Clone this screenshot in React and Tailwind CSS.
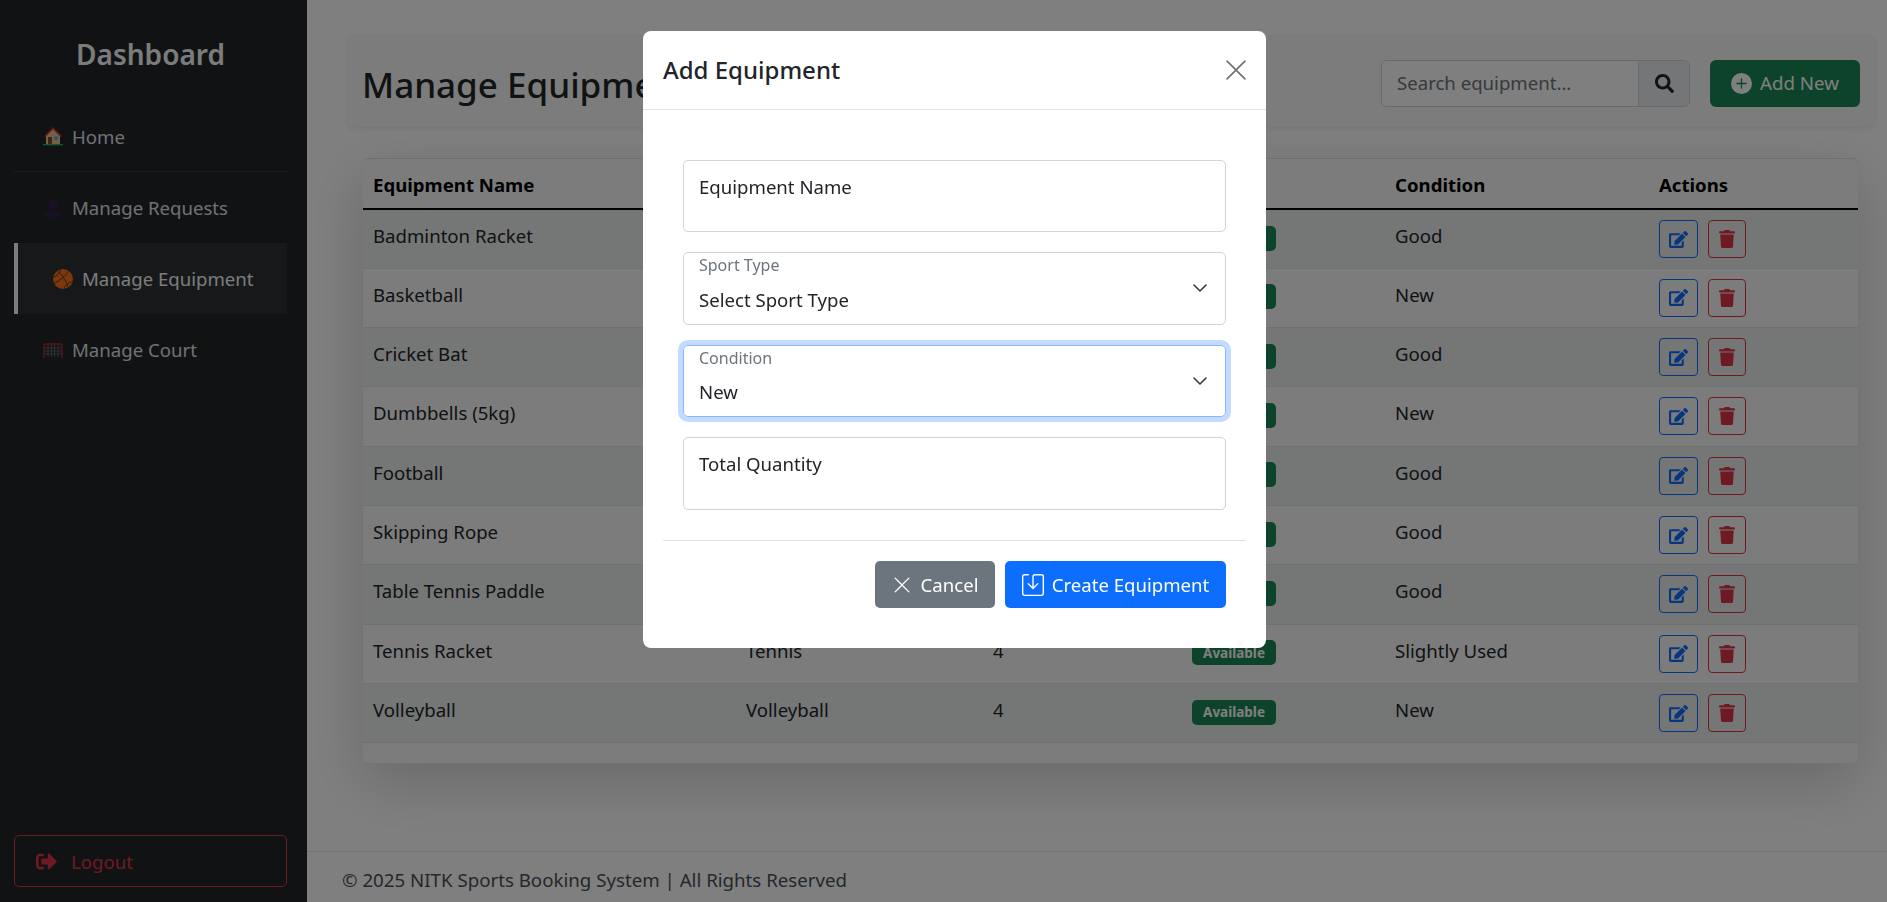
import React from 'react';
import { FaEdit, FaTrash, FaSearch, FaSignOutAlt } from 'react-icons/fa';
import { BsPlusCircleFill, BsXLg, BsSave } from 'react-icons/bs';

const rows = [
    ['Badminton Racket', 'Badminton', '6', 'Good'],
    ['Basketball', 'Basketball', '5', 'New'],
    ['Cricket Bat', 'Cricket', '3', 'Good'],
    ['Dumbbells (5kg)', 'Fitness', '8', 'New'],
    ['Football', 'Football', '5', 'Good'],
    ['Skipping Rope', 'Fitness', '10', 'Good'],
    ['Table Tennis Paddle', 'Table Tennis', '6', 'Good'],
    ['Tennis Racket', 'Tennis', '4', 'Slightly Used'],
    ['Volleyball', 'Volleyball', '4', 'New'],
];

const HouseIcon = () => (
    <svg viewBox="0 0 20 20" className="w-5 h-5 shrink-0 -mt-[2px]">
        <path d="M3 9V18h14V9L10 2.500z" fill="#e8c08a" />
        <path d="M1 10 10 1l9 9-1.200 1L10 3.400 2.200 11z" fill="#c9302c" />
        <rect x="5" y="11" width="4" height="7" fill="#7a4a2a" />
        <rect x="11" y="10.500" width="4" height="3.500" fill="#5dade2" />
        <rect x="0" y="18" width="20" height="1.400" fill="#2faa5e" />
    </svg>
);

const BustIcon = () => (
    <svg viewBox="0 0 20 20" className="w-5 h-5 shrink-0">
        <ellipse cx="10" cy="6.500" rx="4.500" ry="5.500" fill="#34204a" />
        <path d="M1 19c0-4 4-5.500 6-6.500h6c2 1 6 2.500 6 6.500z" fill="#34204a" />
    </svg>
);

const BallIcon = () => (
    <svg viewBox="0 0 20 20" className="w-5 h-5 shrink-0">
        <circle cx="10" cy="10" r="10" fill="#f2711c" />
        <g fill="none" stroke="#5a2a0a" strokeWidth="0.8">
            <path d="M1 14.500C6 12 13 7 15.500 2.200" />
            <path d="M4.500 2C9 6 13 11 15 18.500" />
            <path d="M0.500 8C4 7 6.500 4.500 8 0.500" />
            <path d="M11 19.500C12.500 16 15.500 13.500 19.500 12.500" />
        </g>
    </svg>
);

const GoalIcon = () => (
    <svg viewBox="0 0 20 20" className="w-5 h-5 shrink-0">
        <g fill="none" stroke="#777" strokeWidth="0.7">
            <path d="M1 8h18M1 11h18M1 14h18M5 5v12M8.500 5v12M11.500 5v12M15 5v12" />
        </g>
        <path d="M1 18V5.500C1 4.500 2 4 3 4h14c1 0 2 .5 2 1.500V18" fill="none" stroke="#c0272d" strokeWidth="1.300" />
    </svg>
);

const Sidebar = () => (
    <aside className="w-[307px] shrink-0 h-full bg-[#212529] flex flex-col pl-[14px] pr-[20px]">
        <h2 className="h-[101px] pt-[34px] text-center text-[28px] leading-[40px] font-semibold text-[#f8f9fa]">Dashboard</h2>
        <nav className="flex flex-col">
            <a className="h-[71px] pt-[1px] flex items-center gap-[9px] pl-[29px] text-[18.6px] text-[#dee2e6] border-b border-white/10"><HouseIcon /> Home</a>
            <a className="h-[71px] pt-[1px] flex items-center gap-[9px] pl-[29px] text-[18.6px] text-[#dee2e6]"><BustIcon /> Manage Requests</a>
            <a className="h-[71px] pt-[1px] flex items-center gap-[9px] pl-[35px] text-[18.6px] text-[#f8f9fa] bg-white/5 border-l-4 border-[#f8f9fa]"><BallIcon /> Manage Equipment</a>
            <a className="h-[71px] pt-[1px] flex items-center gap-[9px] pl-[29px] text-[18.6px] text-[#dee2e6]"><GoalIcon /> Manage Court</a>
        </nav>
        <button className="mt-auto mb-[15px] h-[52px] pt-[1px] flex items-center gap-[14px] pl-[21px] text-[18.6px] text-[#dc3545] border border-[#dc3545] rounded-[5px]">
            <FaSignOutAlt className="w-[21px] h-[21px]" /> Logout
        </button>
    </aside>
);

const Header = () => (
    <div className="h-[92px] ml-[40px] mr-[12px] pl-[15px] pr-[15px] bg-[#f8f9fa] rounded-[6px] shadow-[0_2px_5px_rgba(0,0,0,0.075)] flex items-center justify-between">
        <h1 className="mt-[8px] text-[35px] font-medium text-[#212529]">Manage Equipment</h1>
        <div className="flex items-center gap-[20px] mt-[4px]">
            <div className="flex w-[309px] h-[47px] border border-[#ced4da] rounded-[6px] overflow-hidden">
                <div className="flex-1 bg-white flex items-center pl-[15px] text-[18.6px] text-[#6c757d]">Search equipment...</div>
                <div className="w-[51px] bg-[#e9ecef] border-l border-[#ced4da] flex items-center justify-center text-[#212529]">
                    <FaSearch className="w-[19px] h-[19px]" />
                </div>
            </div>
            <button className="w-[150px] h-[47px] bg-[#198754] rounded-[6px] flex items-center justify-center gap-[8px] text-[18.7px] text-white">
                <BsPlusCircleFill className="w-[21px] h-[21px]" /> Add New
            </button>
        </div>
    </div>
);

const EquipmentTable = () => (
    <div className="mt-[31px] ml-[56px] mr-[29px] h-[605px] bg-[#f8f9fa] rounded-[6px] border-t border-black/10 shadow-[0_19px_58px_rgba(0,0,0,0.175)] overflow-hidden">
        <table className="w-full table-fixed text-left text-[18.6px] text-[#212529]">
            <colgroup>
                <col className="w-[373px]" />
                <col className="w-[247px]" />
                <col className="w-[199px]" />
                <col className="w-[203px]" />
                <col className="w-[264px]" />
                <col />
            </colgroup>
            <thead>
                <tr className="h-[50px] border-b-2 border-black text-black">
                    <th className="px-[10px] pt-[2px] font-bold">Equipment Name</th>
                    <th className="px-[10px] pt-[2px] font-bold">Sport Type</th>
                    <th className="px-[10px] pt-[2px] font-bold">Quantity</th>
                    <th className="px-[10px] pt-[2px] font-bold">Status</th>
                    <th className="px-[10px] pt-[2px] font-bold">Condition</th>
                    <th className="px-[10px] pt-[2px] font-bold">Actions</th>
                </tr>
            </thead>
            <tbody>
                {rows.map((row, index) => (
                    <tr key={row[0]} className={index % 2 === 0 ? 'h-[59.33px] border-b border-[#dee2e6] bg-black/5' : 'h-[59.33px] border-b border-[#dee2e6]'}>
                        <td className="px-[10px] pt-[12px] align-top">{row[0]}</td>
                        <td className="px-[10px] pt-[12px] align-top">{row[1]}</td>
                        <td className="px-[10px] pt-[12px] align-top">{row[2]}</td>
                        <td className="px-[10px] pt-[12px] align-top">
                            <span className="inline-flex items-center justify-center w-[84px] h-[25px] rounded-[5px] bg-[#198754] text-white text-[13.5px] font-bold">Available</span>
                        </td>
                        <td className="px-[10px] pt-[12px] align-top">{row[3]}</td>
                        <td className="px-[10px] pt-[10px] align-top">
                            <div className="flex gap-[10px]">
                                <button className="w-[39px] h-[38px] flex items-center justify-center rounded-[4px] border border-[#0d6efd] text-[#0d6efd]">
                                    <FaEdit className="w-[19px] h-[17px]" />
                                </button>
                                <button className="w-[38px] h-[38px] flex items-center justify-center rounded-[4px] border border-[#dc3545] text-[#dc3545]">
                                    <FaTrash className="w-[16px] h-[18px]" />
                                </button>
                            </div>
                        </td>
                    </tr>
                ))}
            </tbody>
        </table>
    </div>
);

const SelectField = ({ label, value, focused }) => (
    <div className={focused
        ? 'h-[72px] rounded-[5px] border border-[#86b7fe] shadow-[0_0_0_5px_rgba(13,110,253,0.25)] pl-[15px] pr-[17px] flex justify-between'
        : 'h-[73px] rounded-[5px] border border-[#ced4da] pl-[15px] pr-[17px] flex justify-between'}>
        <div className="flex flex-col pt-[2px]">
            <span className="text-[16px] leading-[20px] text-[#6c757d]">{label}</span>
            <span className={focused ? 'mt-[11px] text-[18.6px] leading-[26px] text-[#212529]' : 'mt-[12px] text-[18.6px] leading-[26px] text-[#212529]'}>{value}</span>
        </div>
        <svg viewBox="0 0 16 16" className="w-[16px] h-[16px] mt-[27px]" fill="none" stroke="#343a40" strokeWidth="1.600" strokeLinecap="round" strokeLinejoin="round">
            <path d="m2 5 6 6 6-6" />
        </svg>
    </div>
);

const Modal = () => (
    <div className="fixed inset-0 bg-black/50 pl-[643px] pt-[31px]">
        <div className="w-[623px] h-[617px] bg-white rounded-[8px] flex flex-col">
            <div className="h-[79px] px-[20px] border-b border-[#dee2e6] flex items-center justify-between">
                <h5 className="text-[24px] font-medium text-[#212529]">Add Equipment</h5>
                <BsXLg className="w-[26px] h-[26px] text-[#6f6f6f] mr-[-3px]" />
            </div>
            <div className="px-[40px] pt-[50px] flex flex-col gap-[20px]">
                <div className="h-[72px] border border-[#ced4da] rounded-[5px] px-[15px] pt-[12px] text-[18.6px] text-[#212529]">Equipment Name</div>
                <SelectField label="Sport Type" value="Select Sport Type" />
                <SelectField label="Condition" value="New" focused />
                <div className="h-[73px] border border-[#ced4da] rounded-[5px] px-[15px] pt-[12px] text-[18.6px] text-[#212529]">Total Quantity</div>
            </div>
            <div className="mx-[20px] mt-[30px] pt-[20px] pr-[20px] border-t border-[#dee2e6] flex justify-end gap-[10px]">
                <button className="w-[120px] h-[47px] rounded-[5px] bg-[#6c757d] text-white text-[18.6px] flex items-center justify-center gap-[9px]">
                    <BsXLg className="w-[20px] h-[20px]" /> Cancel
                </button>
                <button className="w-[221px] h-[47px] rounded-[5px] bg-[#0d6efd] text-white text-[18.6px] flex items-center justify-center gap-[8px]">
                    <BsSave className="w-[22px] h-[22px]" /> Create Equipment
                </button>
            </div>
        </div>
    </div>
);

const App = () => (
    <div className="h-screen flex overflow-hidden bg-white font-['Noto_Sans',sans-serif]">
        <Sidebar />
        <main className="flex-1 flex flex-col pt-[35px]">
            <Header />
            <EquipmentTable />
            <footer className="mt-auto h-[51px] border-t border-[#dee2e6] pl-[35px] pt-[7px] flex items-center text-[18.7px] text-[#495057]">
                © 2025 NITK Sports Booking System | All Rights Reserved
            </footer>
        </main>
        <Modal />
    </div>
);

export default App;
